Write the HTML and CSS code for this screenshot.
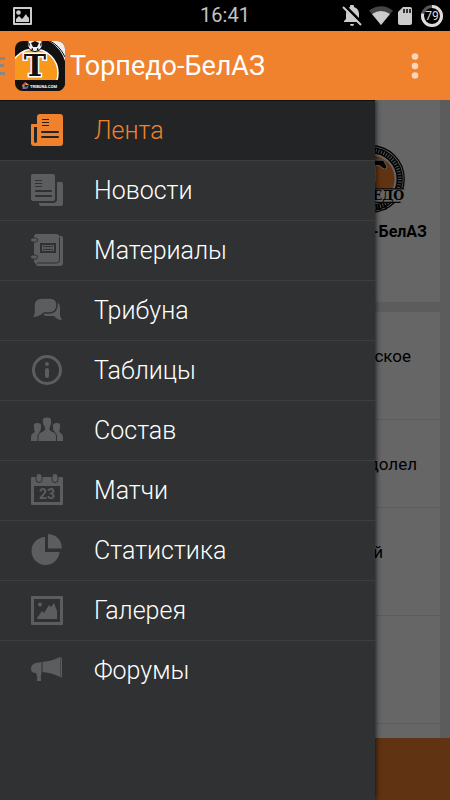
FILE: index.html
```html
<!DOCTYPE html>
<html lang="ru">
<head>
<meta charset="utf-8">
<meta name="viewport" content="width=device-width, initial-scale=1">
<title>Торпедо-БелАЗ</title>
<link rel="stylesheet" href="styles.css">
</head>
<body>
<div class="status">
  <svg class="status-shot" width="19" height="18" viewBox="0 0 19 18" aria-hidden="true"><path fill="#ccc" fill-rule="evenodd" d="M1 0h17q1 0 1 1v16q0 1-1 1H1q-1 0-1-1V1q0-1 1-1zM2 2v14h15V2z"/><path fill="#ccc" d="M3 15v-3l3-3 3 3 1-1 3-4 1 2 2 2v4z"/><circle cx="5.500" cy="5.500" r="2.300" fill="#ccc"/></svg>
  <time class="clock">16:41</time>
  <div class="status-icons">
    <svg width="20" height="22" viewBox="0 0 20 22" aria-hidden="true"><g fill="#ccc"><path d="M8 2V1.500a2 2 0 0 1 4 0V2c3 1 5 3.500 5 7v5l2 3H2v-1l2-2V9c0-3.500 1.500-6 4-7z"/><path d="M8 19h4q0 2-2 2t-2-2z"/></g><path stroke="#000" stroke-width="3" d="M2 0l18 18"/><path stroke="#ccc" stroke-width="2" d="M1 2l18 18"/></svg>
    <svg width="24" height="19" viewBox="0 0 24 19" aria-hidden="true"><path fill="#444" d="M0 4.500Q12-4 24 4.500L12 19z"/><path fill="#ccc" d="M3 8q9-6 18 0l-9 11z"/></svg>
    <svg width="14" height="18" viewBox="0 0 14 18" aria-hidden="true"><path fill="#ccc" d="M5 0h7q2 0 2 2v14q0 2-2 2H2q-2 0-2-2V5z"/><path stroke="#000" stroke-width="1.500" d="M6 2v4M9 2v4M12 2v4"/></svg>
    <svg width="22" height="22" viewBox="0 0 22 22" aria-hidden="true"><circle cx="11" cy="11" r="9.500" fill="none" stroke="#555" stroke-width="3"/><circle cx="11" cy="11" r="9.500" fill="none" stroke="#ddd" stroke-width="3" pathLength="100" stroke-dasharray="79 21" transform="rotate(-90 11 11)"/><text class="battery-text" x="11" y="15" text-anchor="middle">79</text></svg>
  </div>
</div>

<header class="appbar">
  <button class="home" type="button" aria-label="Меню">
    <svg width="5" height="18" viewBox="0 0 5 18" aria-hidden="true"><path fill="#8c8580" d="M0 0h5v3H0zM0 7h4v3H0zM0 15h5v3H0z"/></svg>
    <svg class="logo" width="50" height="50" viewBox="0 0 50 50" aria-hidden="true">
      <rect width="50" height="50" fill="#111"/>
      <path fill="#eee" d="M34 0h16v20Q46 7 34 0z"/>
      <path fill="none" stroke="#111" stroke-width="1" d="M35 0Q45 5 50 16"/>
      <circle cx="19" cy="32" r="24" fill="#f8981d" stroke="#fff" stroke-width="1.500"/>
      <circle cx="20" cy="3" r="7.500" fill="#eee" stroke="#111" stroke-width="1"/>
      <path fill="#111" d="M20 0l4 2-2 4h-4l-2-4zM13 1l2 2-1 3zM27 1l-2 2 1 3zM16 8l2-1v3zM24 8l-2-1v3z"/>
      <text class="logo-letter" x="20" y="35" text-anchor="middle">Т</text>
      <path fill="#111" d="M0 39h50v11H0z"/>
      <path fill="#e8403c" d="M10 41l1 3h-4z"/><path fill="#f8c21d" d="M10 41l1 3h3z"/><path fill="#2fa4d8" d="M14 44l-3 2 1 2z"/><path fill="#8d55b5" d="M10 45l2 3-5 0z"/><path fill="#68b944" d="M7 44l3 0-2 4z"/>
      <text class="logo-brand" x="15" y="47">TRIBUNA.COM</text>
    </svg>
  </button>
  <h1 class="title">Торпедо-БелАЗ</h1>
  <button class="more" type="button" aria-label="Ещё"><svg width="8" height="26" viewBox="0 0 8 26" aria-hidden="true"><g fill="#fbd5b9"><circle cx="4" cy="3.500" r="3.300"/><circle cx="4" cy="13" r="3.300"/><circle cx="4" cy="22.500" r="3.300"/></g></svg></button>
</header>

<div class="stage">
  <main class="content">
    <section class="team">
      <svg width="70" height="70" viewBox="0 0 78 78" aria-hidden="true">
        <circle cx="39" cy="39" r="37" fill="#fff" stroke="#111" stroke-width="1.500"/>
        <circle cx="39" cy="39" r="32" fill="none" stroke="#111" stroke-width="7"/>
        <circle cx="39" cy="39" r="32" fill="none" stroke="#ddd" stroke-width="4" stroke-dasharray="1 2"/>
        <circle cx="39" cy="39" r="27" fill="#f0812d" stroke="#fff" stroke-width="1.500"/>
        <path d="M25 18h28l4 8-3 2-6-4h-4v18H33V24h-5l-4 4z" stroke="#fff"/>
        <path fill="#fff" d="M1 50h76v15H1z"/><path stroke="#111" stroke-width="1.500" d="M1 50h75M6 65h66"/>
        <text class="crest-text" x="76" y="62" text-anchor="end">ТОРПЕДО</text>
        <text class="crest-small" x="39" y="74" text-anchor="middle">БЕЛАЗ</text>
      </svg>
      <h2 class="team-name">Торпедо-БелАЗ</h2>
    </section>
    <section class="feed">
      <p class="post post-a">ское</p>
      <p class="post post-b">долел</p>
      <p class="post post-c">й</p>
      <p class="post post-d"></p>
      <p class="post post-e"></p>
    </section>
    <div class="bottom"></div>
  </main>
  <div class="scrim"></div>
  <nav class="drawer">
    <a class="item active" href="#"><svg viewBox="0 0 32 32" aria-hidden="true"><path fill="currentColor" fill-rule="evenodd" d="M9 0h20q3 0 3 3v26q0 3-3 3H3q-3 0-3-3V11q0-1 1-1h5V3q0-3 3-3zM3 13v14q0 2 1.500 2T6 27V13z"/><path class="cut" stroke-width="1" d="M11 5.500h7M11 8.500h7M11 11.500h7"/><path class="cut" stroke-width="2" stroke-linecap="round" d="M11 18h16M11 23h16"/></svg>Лента</a>
    <a class="item" href="#"><svg viewBox="0 0 32 32" aria-hidden="true"><path fill="currentColor" d="M10 8h20q2 0 2 2v20q0 2-2 2H10q-2 0-2-2v-3z"/><rect class="cut" fill="currentColor" x="-1" y="-1" width="26" height="29" rx="3" stroke-width="2"/><path class="cut" stroke-width="1" d="M4 6.500h7M4 9.500h7M4 12.500h7"/><path class="cut" stroke-width="2" stroke-linecap="round" d="M5 17h15M5 22h15"/></svg>Новости</a>
    <a class="item" href="#"><svg viewBox="0 0 32 32" aria-hidden="true"><path fill="currentColor" d="M5 0h20q3 0 3 2h2q2 0 2 2v25q0 3-3 3H7q-2 0-2-2-2-1-2-3V4q0-4 2-4z"/><path class="cut" fill="none" stroke-width="1" d="M28.500 3v23q0 3-3 3H6"/><path class="cut" fill="none" stroke-width="2" d="M10 10h14v8H10z"/><path class="cut" stroke-width="1" d="M12 12.500h10M12 15.500h10"/><g fill="currentColor" class="cut" stroke-width="1"><rect x="-.500" y="4" width="7" height="4" rx="2"/><rect x="-.500" y="21" width="7" height="4" rx="2"/></g></svg>Материалы</a>
    <a class="item" href="#"><svg viewBox="0 0 32 32" aria-hidden="true"><path fill="currentColor" d="M25 8q4 1 4 6v7q0 2 2 5-5 0-8-4H16q-4 0-5-4h7q8 0 8-7z"/><path class="cut" fill="currentColor" stroke-width="1.500" d="M11 4h8q7 0 7 7t-7 8h-6q-5 5-13 5 3-2 3-6v-6q0-8 8-8z"/></svg>Трибуна</a>
    <a class="item" href="#"><svg viewBox="0 0 32 32" aria-hidden="true"><circle cx="16" cy="16" r="13.500" fill="none" stroke="currentColor" stroke-width="3"/><circle cx="16" cy="10" r="2" fill="currentColor"/><rect x="14" y="14" width="4" height="10" rx="2" fill="currentColor"/></svg>Таблицы</a>
    <a class="item" href="#"><svg viewBox="0 0 32 32" aria-hidden="true"><g fill="currentColor"><path d="M3 13q-1-4 3-4 5 0 4 4 0 4-2 5 3 1 5 2v7H0v-4q0-3 4-5-1-2-1-5z"/><path transform="matrix(-1 0 0 1 32 0)" d="M3 13q-1-4 3-4 5 0 4 4 0 4-2 5 3 1 5 2v7H0v-4q0-3 4-5-1-2-1-5z"/><path class="cut" stroke-width="1" d="M11.500 8q-1-5 4.500-5 5.500 0 4.500 5 1 2-1 4 0 2-1 3 1 2 4 3 3 1 3 4v5.500H7V22q0-3 3-4 3-1 4-3-1-1-1-3-2-2-1.500-4z"/></g><path class="cut" stroke-width="1" d="M0 27.500h32"/></svg>Состав</a>
    <a class="item" href="#"><svg viewBox="0 0 32 32" aria-hidden="true"><path fill="currentColor" fill-rule="evenodd" d="M1 3h30q1 0 1 1v26q0 1-1 1H1q-1 0-1-1V4q0-1 1-1zM3 12v16h26V12z"/><g fill="currentColor" class="cut" stroke-width="1"><rect x="5" y="-.500" width="6" height="9" rx="3"/><rect x="21" y="-.500" width="6" height="9" rx="3"/></g><text class="date" x="16" y="25" text-anchor="middle">23</text></svg>Матчи</a>
    <a class="item" href="#"><svg viewBox="0 0 32 32" aria-hidden="true"><path fill="currentColor" d="M14 3v15h14.500A14 14 0 1 1 14 3zM17 0q13 1 14 14.500H17z"/></svg>Статистика</a>
    <a class="item" href="#"><svg viewBox="0 0 32 32" aria-hidden="true"><path fill="currentColor" fill-rule="evenodd" d="M1 2h30q1 0 1 1v27q0 1-1 1H1q-1 0-1-1V3q0-1 1-1zM3 5v23h26V5z"/><path fill="currentColor" d="M6 25v-1l5-7 2 2 5-8 2 2 3-4 3 8v8z"/><circle cx="9" cy="10.500" r="2" fill="currentColor"/></svg>Галерея</a>
    <a class="item" href="#"><svg viewBox="0 0 32 32" aria-hidden="true"><path fill="currentColor" d="M10.500 8v11q-1 2-.500 8H6q1-4-1-8-5 0-5-4 0-5 5-6zM11.500 8q10-1 17.500-5v20q-7-4-17.500-5z"/><path fill="currentColor" d="M29.500 3q1.500 0 1.500 2v17q0 2-1.500 2z"/></svg>Форумы</a>
  </nav>
</div>
</body>
</html>
```
FILE: styles.css
```css
* { box-sizing: border-box; }

body {
  margin: 0;
  min-height: 100vh;
  display: flex;
  flex-direction: column;
  background: #000;
  font-family: Roboto, "Noto Sans", sans-serif;
}

button {
  border: 0;
  padding: 0;
  background: none;
}

svg { display: block; flex: none; }

.status {
  display: grid;
  grid-template-columns: 1fr auto 1fr;
  align-items: center;
  height: 31px;
  padding: 0 7px;
}
.status-shot { margin-left: 6px; }
.clock { color: #c4c4c4; font-size: 20px; line-height: 31px; }
.status-icons {
  display: flex;
  justify-content: flex-end;
  align-items: center;
  gap: 7px;
}
.status-icons svg:nth-child(3) { margin: 0 2px 0 -2px; }
.battery-text { fill: #ddd; font-size: 12px; }

.appbar {
  display: flex;
  align-items: center;
  height: 69px;
  padding-right: 31px;
  background: #f0812d;
}
.home { display: flex; align-items: center; gap: 10px; }
.logo { border-radius: 8px; }
.logo-letter {
  font: bold 30px "DejaVu Serif", serif;
  fill: #111;
  stroke: #fff;
  stroke-width: 3px;
  paint-order: stroke;
}
.logo-brand { font: bold 4px Roboto, sans-serif; fill: #fff; }
.title {
  flex: 1;
  margin: 0 0 0 5px;
  color: #fff;
  font-size: 27px;
  font-weight: 400;
  line-height: 32px;
}

.stage {
  flex: 1;
  display: grid;
  position: relative;
  overflow: hidden;
}
.content, .drawer { grid-area: 1 / 1; }

.content {
  display: flex;
  flex-direction: column;
  background: #e6e6e6;
}
.team {
  display: flex;
  flex-direction: column;
  align-items: flex-end;
  gap: 6px;
  height: 202px;
  margin-right: 10px;
  padding: 44px 13px 0 0;
  background: #fff;
}
.team svg { margin-right: 21px; overflow: visible; }
.team-name { margin: 0; font-size: 16px; line-height: 24px; font-weight: 700; }
.feed {
  flex: 1;
  margin: 10px 10px 0 0;
  background: #fff;
}
.post {
  height: 108px;
  margin: 0;
  padding-top: 32px;
  border-bottom: 1px solid #e6e6e6;
  font-size: 17px;
  line-height: 24px;
  text-align: right;
}
.post-a { padding-right: 29px; }
.post-b { padding-right: 23px; height: 88px; }
.post-c { padding-right: 57px; }
.post-e { height: 14px; padding: 0; border: 0; }
.bottom { height: 62px; background: #f0812d; }

.scrim {
  position: absolute;
  inset: 0;
  background: rgba(0, 0, 0, 0.6);
}

.drawer {
  position: relative;
  width: 83.4%;
  background: #303133;
  box-shadow: 1px 0 5px rgba(0, 0, 0, 0.7);
}
.item {
  --surface: #303133;
  display: flex;
  align-items: center;
  gap: 31px;
  height: 60px;
  padding-left: 31px;
  border-top: 1px solid #3d3e40;
  color: #fff;
  font-size: 25px;
  font-weight: 300;
  line-height: 32px;
  text-decoration: none;
}
.item svg {
  width: 32px;
  height: 32px;
  margin-bottom: 2px;
  overflow: visible;
  color: #5c5d5f;
}
.item.active {
  --surface: #232425;
  background: #232425;
  border-top-color: #111;
  color: #f0812d;
}
.item.active svg { color: #f0812d; }
.cut { stroke: var(--surface); }
.date { fill: currentColor; font-size: 14px; font-weight: 700; }

.crest-text { font: bold 14px "DejaVu Serif", serif; }
.crest-small { font: bold 9px "DejaVu Serif", serif; }
```
